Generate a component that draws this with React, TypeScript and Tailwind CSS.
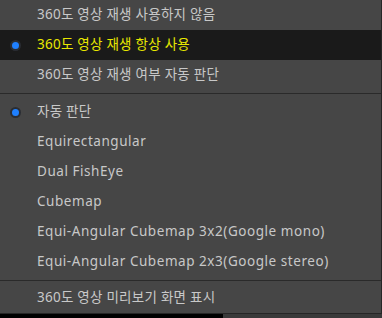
import React from "react";

const font = {
  fontFamily: '"Noto Sans", "Noto Sans CJK KR", sans-serif',
};

function Bullet() {
  return (
    <span className="flex h-[11px] w-[11px] items-center justify-center rounded-full bg-[#2a2d33]">
      <span className="h-[7px] w-[7px] rounded-full bg-[#1f80ff]" />
    </span>
  );
}

function Row({
  label,
  checked = false,
  active = false,
  korean = false,
}: {
  label: string;
  checked?: boolean;
  active?: boolean;
  korean?: boolean;
}) {
  return (
    <div
      className={`flex h-[30px] items-center ${active ? "bg-[#1a1a1a]" : ""}`}
    >
      <div className="flex w-[37px] items-center justify-center pr-[7px]">
        {checked ? <Bullet /> : null}
      </div>
      <span
        className={`text-[13.5px] leading-none whitespace-nowrap ${
          korean ? "tracking-[0.25px]" : "tracking-[0.55px]"
        } ${active ? "text-[#e8e800]" : "text-[#c8c8c8]"}`}
      >
        {label}
      </span>
    </div>
  );
}

function Separator({ h }: { h: string }) {
  return (
    <div className={`${h} pt-[3px]`}>
      <div className="h-px bg-[#2a2a2a]" />
    </div>
  );
}

export default function App() {
  return (
    <div className="h-[318px] w-[382px] overflow-hidden bg-black" style={font}>
      <div className="w-[382px] border-r border-b border-[#262626] bg-[#464646]">
        <Row label="360도 영상 재생 사용하지 않음" korean />
        <Row label="360도 영상 재생 항상 사용" checked active korean />
        <Row label="360도 영상 재생 여부 자동 판단" korean />
        <Separator h="h-[7px]" />
        <Row label="자동 판단" checked korean />
        <Row label="Equirectangular" />
        <Row label="Dual FishEye" />
        <Row label="Cubemap" />
        <Row label="Equi-Angular Cubemap 3x2(Google mono)" />
        <Row label="Equi-Angular Cubemap 2x3(Google stereo)" />
        <Separator h="h-[6px]" />
        <Row label="360도 영상 미리보기 화면 표시" korean />
      </div>
      <div className="flex h-[5px]">
        <div className="w-[223px] bg-black" />
        <div className="flex-1 bg-[#3a3a3a]" />
      </div>
    </div>
  );
}
